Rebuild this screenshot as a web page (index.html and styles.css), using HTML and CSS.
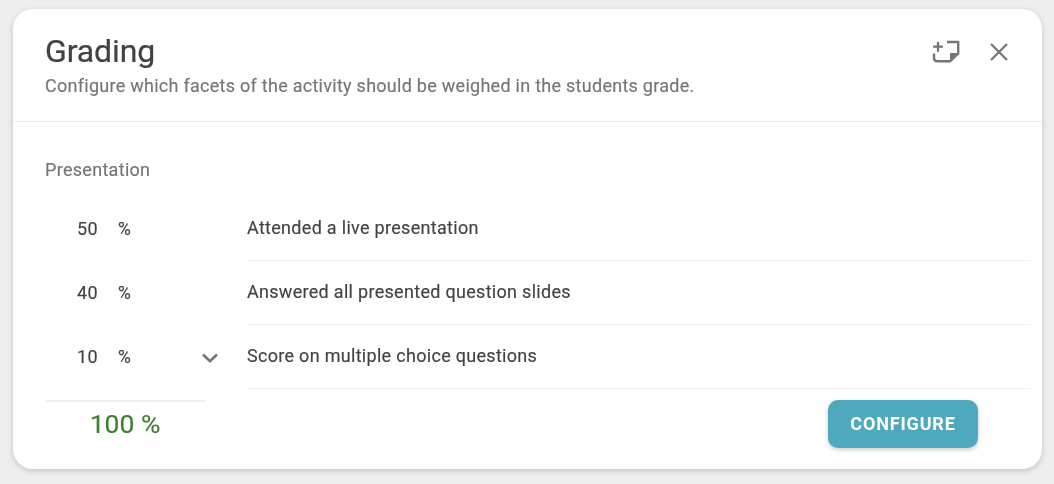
FILE: index.html
```html
<!DOCTYPE html>
<html lang="en">
<head>
<meta charset="utf-8">
<title>Grading</title>
<link rel="stylesheet" href="styles.css">
</head>
<body>
<main class="card">
  <header class="head">
    <div class="head-text">
      <h1 class="title">Grading</h1>
      <p class="subtitle">Configure which facets of the activity should be weighed in the students grade.</p>
    </div>
    <div class="head-icons">
      <svg class="icon-note" width="30" height="24" viewBox="0 0 30 24" fill="none">
        <path d="M8 2.7V12.7M3 7.7H13" stroke="#757575" stroke-width="2.2"/>
        <path d="M17 3H28.2V14.5L20 22.2H7.5Q4 22.2 4 18.7V14.5" stroke="#757575" stroke-width="2.4"/>
        <path d="M20 23V14H29.4L20 23Z" fill="#757575"/>
      </svg>
      <svg class="icon-close" width="20" height="20" viewBox="0 0 20 20" fill="none">
        <path d="M2 2L18 18M18 2L2 18" stroke="#757575" stroke-width="2.2"/>
      </svg>
    </div>
  </header>
  <section class="body">
    <h2 class="section">Presentation</h2>
    <div class="row">
      <div class="weight"><span class="num">50</span><span class="pct">%</span></div>
      <div class="label">Attended a live presentation</div>
    </div>
    <div class="row">
      <div class="weight"><span class="num">40</span><span class="pct">%</span></div>
      <div class="label">Answered all presented question slides</div>
    </div>
    <div class="row">
      <div class="weight">
        <span class="num">10</span><span class="pct">%</span>
        <svg class="chev" width="16" height="10" viewBox="0 0 16 10" fill="none">
          <path d="M1 1.5L8 8.2L15 1.5" stroke="#757575" stroke-width="2.6"/>
        </svg>
      </div>
      <div class="label">Score on multiple choice questions</div>
    </div>
    <div class="foot">
      <div class="total">100 %</div>
      <button class="btn" type="button">CONFIGURE</button>
    </div>
  </section>
</main>
</body>
</html>
```
FILE: styles.css
```css
* { box-sizing: border-box; }
html, body { margin: 0; height: 100%; }
body {
  background: #eeeeee;
  padding: 9px 12px 15px 13px;
  font-family: Roboto, "Liberation Sans", sans-serif;
  overflow: hidden;
}
.card {
  height: 460px;
  background: #fff;
  border-radius: 20px;
  box-shadow: 0 2px 6px rgba(0, 0, 0, .18);
  will-change: transform;
}
.head {
  height: 113px;
  padding: 24px 32px 0;
  border-bottom: 1px solid #eeeeee;
  display: flex;
  justify-content: space-between;
}
.title {
  margin: 0;
  font-size: 32px;
  line-height: 36px;
  font-weight: 400;
  letter-spacing: -.1px;
  color: #424242;
  -webkit-text-stroke: .2px #424242;
}
.subtitle {
  margin: 5px 0 0;
  font-size: 18px;
  line-height: 24px;
  letter-spacing: .27px;
  color: #757575;
  -webkit-text-stroke: .15px #757575;
}
.head-icons {
  display: flex;
  align-items: flex-start;
  gap: 29px;
  padding-top: 6px;
  margin-right: 1px;
}
.icon-close { margin-top: 3px; }
.body { padding: 36px 11px 0 32px; }
.section {
  margin: 0 0 15px;
  font-size: 18px;
  line-height: 24px;
  font-weight: 400;
  letter-spacing: .3px;
  color: #757575;
  -webkit-text-stroke: .15px #757575;
}
.row {
  display: flex;
  height: 64px;
}
.weight {
  width: 160px;
  margin-right: 42px;
  padding-left: 32px;
  display: flex;
  align-items: center;
  color: #424242;
  padding-bottom: 1px;
  -webkit-text-stroke: .15px #424242;
}
.num { width: 41px; font-size: 18px; letter-spacing: .3px; }
.pct { font-size: 17.5px; }
.chev { margin-left: auto; margin-right: -13px; margin-top: 3px; }
.label {
  flex: 1;
  display: flex;
  align-items: center;
  padding-bottom: 3px;
  border-bottom: 1px solid #eeeeee;
  font-size: 18px;
  letter-spacing: .3px;
  color: #424242;
  -webkit-text-stroke: .15px #424242;
}
.foot {
  display: flex;
  justify-content: space-between;
  align-items: flex-start;
  margin-top: 11px;
}
.total {
  width: 160px;
  border-top: 2px solid #eeeeee;
  text-align: center;
  font-size: 26.5px;
  line-height: 44px;
  color: #3f7d33;
  -webkit-text-stroke: .15px #3f7d33;
}
.btn {
  width: 150px;
  height: 48px;
  margin-right: 53px;
  padding: 0 0 2px;
  border: 0;
  border-radius: 10px;
  background: #4ea9bf;
  color: #fff;
  font-family: inherit;
  font-size: 18px;
  font-weight: 700;
  letter-spacing: .85px;
  box-shadow: 0 2px 5px rgba(0, 0, 0, .2);
}
```
